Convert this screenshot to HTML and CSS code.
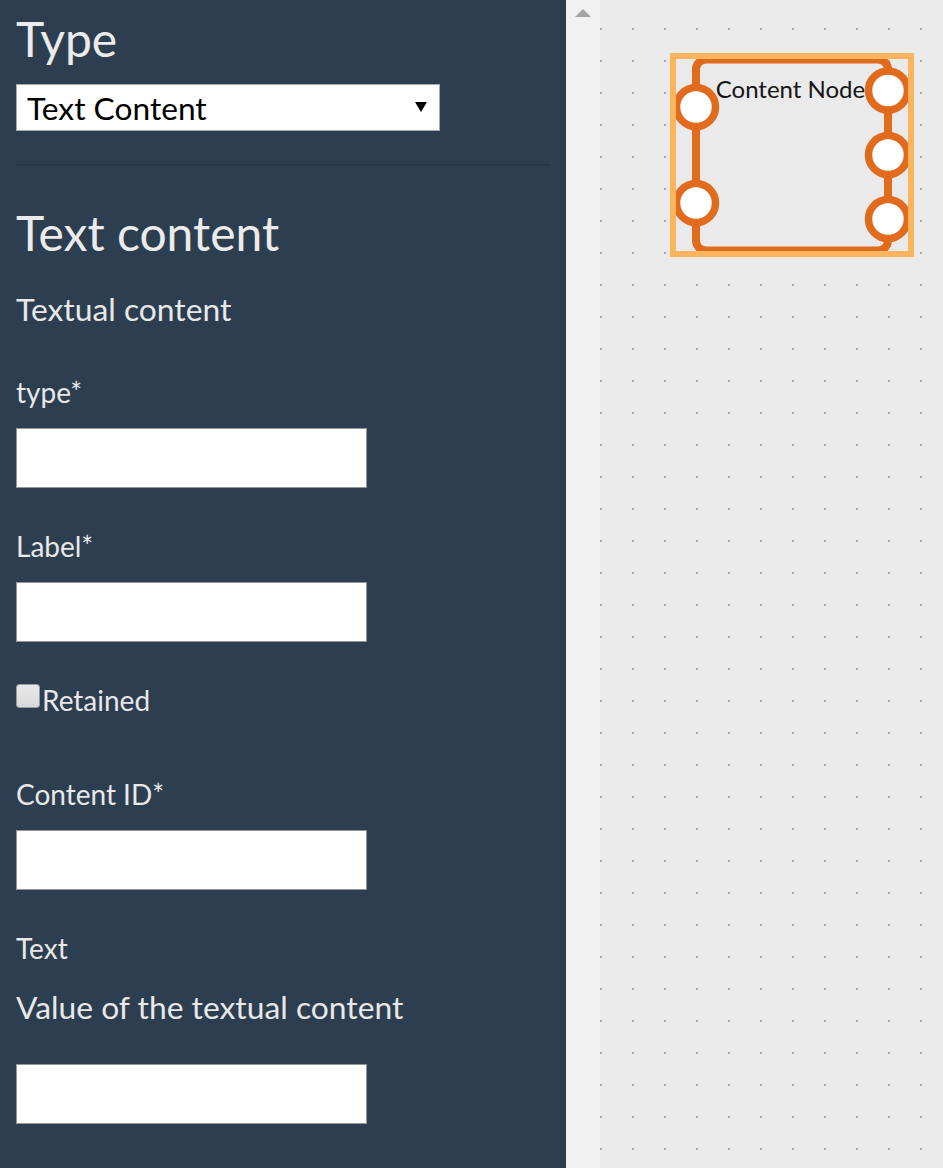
FILE: index.html
```html
<!DOCTYPE html>
<html lang="en">
<head>
<meta charset="utf-8">
<title>Text Content editor</title>
<link rel="stylesheet" href="styles.css">
</head>
<body>
<div class="app">
  <aside class="panel">
    <h1 class="title">Type</h1>
    <div class="select"><span class="select-text">Text Content</span><span class="caret"></span></div>
    <hr class="divider">
    <h2 class="title title-section">Text content</h2>
    <p class="desc desc-object">Textual content</p>

    <div class="field field-first">
      <label class="field-label">type*</label>
      <input class="input" type="text">
    </div>
    <div class="field">
      <label class="field-label">Label*</label>
      <input class="input" type="text">
    </div>
    <div class="check-row">
      <input class="checkbox" type="checkbox"><span class="check-text">Retained</span>
    </div>
    <div class="field field-after-check">
      <label class="field-label">Content ID*</label>
      <input class="input" type="text">
    </div>
    <div class="field">
      <label class="field-label">Text</label>
      <p class="desc desc-field">Value of the textual content</p>
      <input class="input input-after-desc" type="text">
    </div>
  </aside>

  <div class="scroll"><span class="scroll-up"></span></div>

  <main class="canvas">
    <svg class="node" width="343" height="300" viewBox="600 0 343 300" xmlns="http://www.w3.org/2000/svg">
      <defs>
        <clipPath id="sel">
          <rect x="676" y="59" width="232" height="192"/>
        </clipPath>
      </defs>
      <g clip-path="url(#sel)">
        <rect x="696" y="59.5" width="192" height="191" rx="10" ry="10" fill="#eaeaea" stroke="#e06b1d" stroke-width="8"/>
        <text x="790.5" y="98" text-anchor="middle" class="node-label">Content Node</text>
        <g fill="#ffffff" stroke="#e06b1d" stroke-width="7.5">
          <circle cx="696" cy="107" r="19.5"/>
          <circle cx="696" cy="203" r="19.5"/>
          <circle cx="888" cy="90.5" r="19.5"/>
          <circle cx="888" cy="155" r="19.5"/>
          <circle cx="888" cy="219" r="19.5"/>
        </g>
      </g>
      <rect x="673" y="56" width="238" height="198" fill="none" stroke="#feb45e" stroke-width="6"/>
    </svg>
  </main>
</div>
</body>
</html>
```

FILE: styles.css
```css
html, body {
  margin: 0;
  padding: 0;
  height: 100%;
  overflow: hidden;
}

body {
  font-family: Lato, "Liberation Sans", sans-serif;
}

.app {
  display: flex;
  width: 943px;
  height: 1168px;
}

/* ---------- left panel ---------- */
.panel {
  width: 566px;
  flex: none;
  box-sizing: border-box;
  padding: 11px 16px 0;
  background: #2c3e50;
  color: #eaeaea;
  overflow: hidden;
}

.title {
  margin: 0;
  font-size: 48px;
  line-height: 56px;
  font-weight: 400;
  color: #ebebeb;
}

.title-section {
  margin-top: 39px;
}

.select {
  margin-top: 17px;
  width: 424px;
  height: 47px;
  box-sizing: border-box;
  border: 1px solid #a9a9a9;
  background: #ffffff;
  display: flex;
  align-items: center;
  justify-content: space-between;
  padding: 0 12px 0 10px;
  font-size: 31.7px;
  color: #000000;
}

.caret {
  width: 0;
  height: 0;
  border-left: 6.5px solid transparent;
  border-right: 6.5px solid transparent;
  border-top: 10px solid #000000;
  margin-top: -2px;
}

.divider {
  margin: 33px 0 0;
  border: 0;
  height: 2px;
  background: #27384a;
}

.desc {
  margin: 0;
  font-size: 31.8px;
  line-height: 38px;
  color: #e8e8e8;
}

.desc-object {
  margin-top: 29px;
}

.desc-field {
  margin-top: 24px;
}

.field {
  margin-top: 42px;
}

.field-first {
  margin-top: 48px;
}

.field-after-check {
  margin-top: 62px;
}

.field-label {
  display: block;
  font-size: 28px;
  line-height: 32px;
  color: #e8e8e8;
}

.input {
  display: block;
  margin: 20px 0 0;
  width: 351px;
  height: 60px;
  box-sizing: border-box;
  border: 1px solid #959595;
  background: #ffffff;
  padding: 0 8px;
  font-family: inherit;
  font-size: 24px;
  outline: none;
}

.input-after-desc {
  margin-top: 38px;
}

.check-row {
  margin-top: 42px;
  display: flex;
  align-items: flex-start;
}

.checkbox {
  appearance: none;
  -webkit-appearance: none;
  width: 24px;
  height: 24px;
  margin: 0 2px 0 0;
  box-sizing: border-box;
  border: 1.5px solid #9b9b9b;
  border-radius: 3px;
  background: linear-gradient(#e9e9e9, #d9d9d9);
}

.check-text {
  font-size: 28px;
  line-height: 32px;
  color: #e8e8e8;
}

/* ---------- scroll strip ---------- */
.scroll {
  width: 34px;
  flex: none;
  background: #f1f1f1;
}

.scroll-up {
  display: block;
  width: 0;
  height: 0;
  margin: 9px auto 0;
  border-left: 8px solid transparent;
  border-right: 8px solid transparent;
  border-bottom: 8px solid #a3a3a3;
}

/* ---------- canvas ---------- */
.canvas {
  flex: 1;
  position: relative;
  background-color: #eaeaea;
  background-image:
    linear-gradient(to right, transparent 2px, #eaeaea 2px),
    linear-gradient(to bottom, #a9a9a9 2px, #eaeaea 2px);
  background-size: 32px 32px, 32px 32px;
  background-position: 0 28px, 0 28px;
  overflow: hidden;
}

.node {
  position: absolute;
  left: 0;
  top: 0;
}

.node-label {
  font-family: Lato, "Liberation Sans", sans-serif;
  font-size: 24px;
  fill: #151515;
}
```
